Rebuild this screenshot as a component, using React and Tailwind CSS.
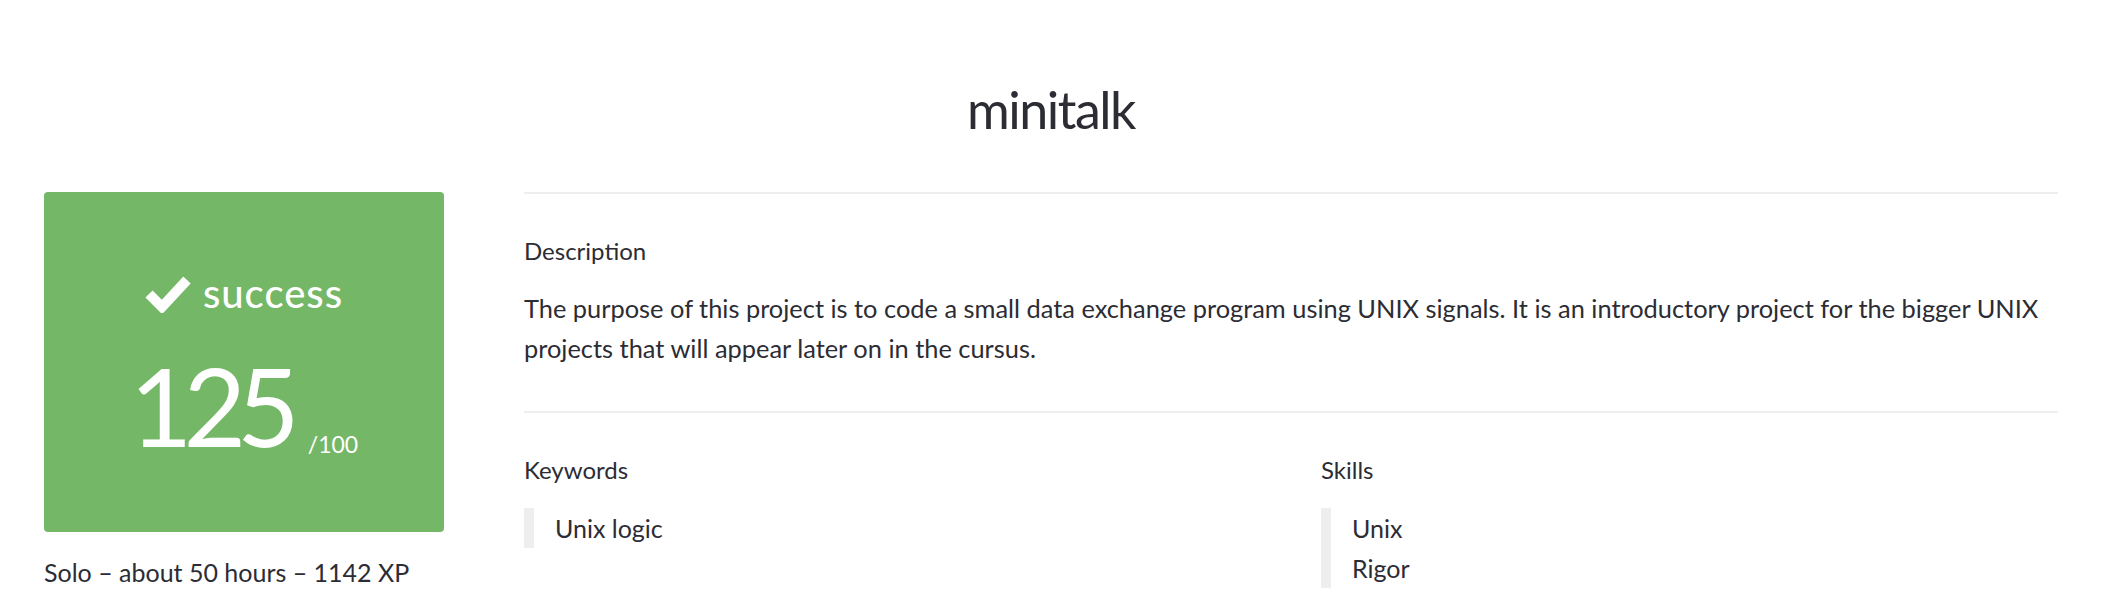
const ink = 'text-[#2c2c34]'

function CheckIcon() {
  return (
    <svg width="46" height="40" viewBox="0 0 46 40" className="shrink-0">
      <polyline points="4,21 17,34 42,7" fill="none" stroke="#ffffff" strokeWidth="10" strokeLinecap="butt" strokeLinejoin="miter" />
    </svg>
  )
}

function Section({ label, children, className = '' }) {
  return (
    <div className={className}>
      <div className="text-[24px] leading-[32px]">{label}</div>
      {children}
    </div>
  )
}

function TagList({ items }) {
  return (
    <div className="mt-[22px] border-l-[10px] border-[#eeeeee] pl-[21px]">
      {items.map(item => (
        <div key={item} className="text-[25px] leading-[40px]">{item}</div>
      ))}
    </div>
  )
}

export default function App() {
  return (
    <div className={`h-[612px] w-[2102px] overflow-hidden bg-white font-['Lato',sans-serif] ${ink}`}>
      {/* title */}
      <div className="h-[192px] pt-[79px] text-center">
        <h1 className="text-[52px] leading-[60px] tracking-[-1.5px]">minitalk</h1>
      </div>

      <div className="flex gap-[80px] px-[44px]">
        {/* mark card */}
        <div className="w-[400px] shrink-0">
          <div className="h-[340px] rounded-[4px] bg-[#74b767] pt-[77px] text-white">
            <div className="flex items-center justify-center gap-[12px]">
              <CheckIcon />
              <span className="text-[40px] leading-[48px] font-medium tracking-[1px]">success</span>
            </div>
            <div className="mt-[34px] text-center leading-[108px]">
              <span className="text-[108px] font-normal tracking-[-9px]">125</span>
              <span className="ml-[17px] text-[23px] align-[-6px]">/100</span>
            </div>
          </div>
          <div className="mt-[20px] text-[25px] leading-[40px]">Solo – about 50 hours – 1142 XP</div>
        </div>

        {/* details */}
        <div className="flex-1 min-w-0">
          <Section label="Description" className="border-t-2 border-[#eeeeee] pt-[41px] pb-[43px]">
            <p className="mt-[21px] text-[25.4px] leading-[40px]">
              The purpose of this project is to code a small data exchange program using UNIX signals. It is an introductory project for the bigger UNIX projects that will appear later on in the cursus.
            </p>
          </Section>
          <div className="grid grid-cols-2 gap-x-[60px] border-t-2 border-[#eeeeee] pt-[41px]">
            <Section label="Keywords">
              <TagList items={['Unix logic']} />
            </Section>
            <Section label="Skills">
              <TagList items={['Unix', 'Rigor']} />
            </Section>
          </div>
        </div>
      </div>
    </div>
  )
}
